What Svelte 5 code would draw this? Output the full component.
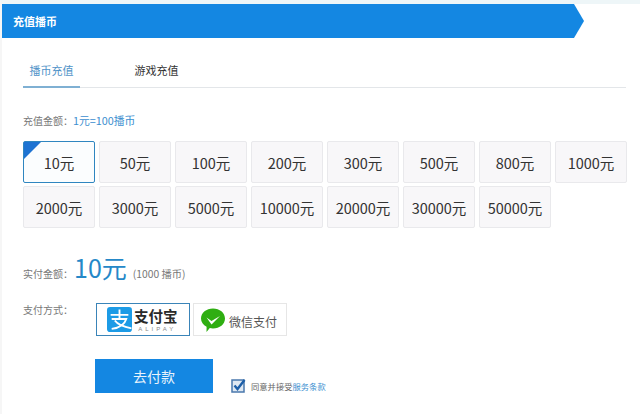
<script>
  const amounts = [10, 50, 100, 200, 300, 500, 800, 1000, 2000, 3000, 5000, 10000, 20000, 30000, 50000];
</script>

<div class="page">
  <div class="banner"><span>充值播币</span></div>

  <div class="tabs">
    <div class="tab active">播币充值</div>
    <div class="tab">游戏充值</div>
  </div>

  <div class="rate">充值金额：<span class="blue">1元=100播币</span></div>

  <div class="grid">
    {#each amounts as a, i}
      <div class="cell" class:selected={i === 0}>{a}元</div>
    {/each}
  </div>

  <div class="pay-row">
    <span class="label">实付金额：</span>
    <span class="big">10元</span>
    <span class="sub">(1000 播币)</span>
  </div>

  <div class="method-row">
    <span class="label method-label">支付方式：</span>
    <div class="method ali">
      <svg class="ali-icon" viewBox="0 0 24 24" width="25" height="25" aria-hidden="true">
        <rect width="24" height="24" rx="3" fill="#1c9be6" />
        <path d="M3.500 7.500h17M12 2.500v9M4.500 11.500h14c-1.500 5-6 8.500-14 9.500M7.500 13c2.500 3.500 8 6 16 7.500" fill="none" stroke="#fff" stroke-width="1.800" />
      </svg>
      <div class="ali-text">
        <div class="ali-cn">支付宝</div>
        <div class="ali-en">ALIPAY</div>
      </div>
    </div>
    <div class="method we">
      <svg class="we-icon" viewBox="0 0 26 26" width="26" height="26" aria-hidden="true">
        <path d="M13 1.500c6.600 0 12 4.300 12 10s-5.400 10-12 10c-1.200 0-2.200-.2-3.200-.4L6.500 25l.1-5.200C3.200 18 1 15 1 11.500 1 5.800 6.400 1.500 13 1.500z" fill="#2fae12" />
        <path d="M6.500 10.500l5 3.500 8.500-5-8.500 8.500z" fill="#fff" />
      </svg>
      <span>微信支付</span>
    </div>
  </div>

  <div class="submit-row">
    <div class="submit">去付款</div>
    <div class="agree">
      <svg viewBox="0 0 15 15" width="15" height="15" aria-hidden="true">
        <rect x="1" y="2" width="12" height="12" fill="#dfe8f2" stroke="#4a78ad" stroke-width="1.500" />
        <path d="M3.500 7.500l3 3.500L13.500 2" fill="none" stroke="#1d5fa8" stroke-width="2.400" />
      </svg>
      <span class="agree-text">同意并接受<span class="blue">服务条款</span></span>
    </div>
  </div>
</div>

<style>
  :global(body) {
    margin: 0;
    background: #fff;
  }

  .page {
    width: 640px;
    height: 414px;
    overflow: hidden;
    box-sizing: border-box;
    border-top: 4px solid #eef6f8;
    border-left: 2px solid #f6f6f6;
    background: #fff;
    font-family: "Noto Sans CJK SC", "Liberation Sans", sans-serif;
    color: #333;
  }

  .banner {
    width: 583px;
    height: 34px;
    background: #1487e2;
    clip-path: polygon(0 0, 572px 0, 582px 50%, 572px 100%, 0 100%);
    display: flex;
    align-items: center;
    padding-left: 11px;
    box-sizing: border-box;
    color: #fff;
    font-size: 11px;
    font-weight: 700;
  }

  .tabs {
    display: flex;
    margin: 15px 0 0 21px;
    width: 603px;
    height: 35px;
    border-bottom: 1px solid #e3e6e9;
    box-sizing: border-box;
  }

  .tab {
    font-size: 11px;
    width: 57px;
    height: 35px;
    box-sizing: border-box;
    text-align: center;
    line-height: 34px;
    color: #333;
  }

  .tab.active {
    color: #4f93c8;
    border-bottom: 2px solid #7fb0d3;
  }

  .tab + .tab {
    margin-left: 48px;
  }

  .rate {
    margin: 25px 0 0 21px;
    font-size: 10px;
    line-height: 14px;
    color: #777;
  }

  .rate .blue {
    font-size: 10.800px;
  }

  .blue {
    color: #3d8fd0;
  }

  .grid {
    display: grid;
    grid-template-columns: repeat(8, 72px);
    grid-auto-rows: 42px;
    column-gap: 4px;
    row-gap: 3px;
    margin: 13px 0 0 21px;
  }

  .cell {
    box-sizing: border-box;
    border: 1px solid #e9e9ec;
    border-radius: 2px;
    background: #f8f7f9;
    display: flex;
    align-items: center;
    justify-content: center;
    font-size: 14.500px;
    color: #333;
  }

  .cell.selected {
    position: relative;
    background: #fbfdfe;
    border-color: #2f86c0;
  }

  .cell.selected::before {
    content: "";
    position: absolute;
    left: 0;
    top: 0;
    border-style: solid;
    border-width: 17px 17px 0 0;
    border-color: #1e73d2 transparent transparent transparent;
  }

  .pay-row {
    display: flex;
    align-items: baseline;
    margin: 23px 0 0 21px;
    height: 32px;
  }

  .label {
    font-size: 10px;
    color: #777;
  }

  .big {
    font-size: 25px;
    line-height: 32px;
    color: #2588c8;
    margin-left: 1px;
  }

  .sub {
    font-size: 10.300px;
    color: #777;
    margin-left: 6px;
  }

  .method-row {
    display: flex;
    margin: 20px 0 0 21px;
    height: 33px;
  }

  .method-label {
    width: 73px;
    line-height: 14px;
  }

  .method {
    box-sizing: border-box;
    height: 33px;
    width: 94px;
    display: flex;
    align-items: center;
  }

  .ali {
    border: 1px solid #3a84b8;
    padding-left: 10px;
    gap: 2px;
  }

  .ali-text {
    display: flex;
    flex-direction: column;
    align-items: center;
  }

  .ali-cn {
    font-size: 14.500px;
    line-height: 20px;
    font-weight: 700;
    color: #2a2a2a;
  }

  .ali-en {
    font-family: "Liberation Sans", sans-serif;
    font-size: 6px;
    line-height: 7px;
    letter-spacing: 3px;
    margin-right: -3px;
    color: #888;
  }

  .we {
    margin-left: 3px;
    border: 1px solid #e6e6e6;
    padding-left: 6px;
    gap: 3px;
    font-size: 12px;
    color: #555;
  }

  .we span {
    padding-top: 3px;
  }

  .submit-row {
    display: flex;
    align-items: flex-end;
    margin: 23px 0 0 93px;
  }

  .submit {
    width: 118px;
    height: 34px;
    background: #1487e2;
    color: #e8f3fc;
    font-size: 14px;
    display: flex;
    align-items: center;
    justify-content: center;
  }

  .agree {
    display: flex;
    align-items: center;
    margin-left: 18px;
    gap: 5px;
  }

  .agree-text {
    font-size: 8.300px;
    color: #666;
  }
</style>
